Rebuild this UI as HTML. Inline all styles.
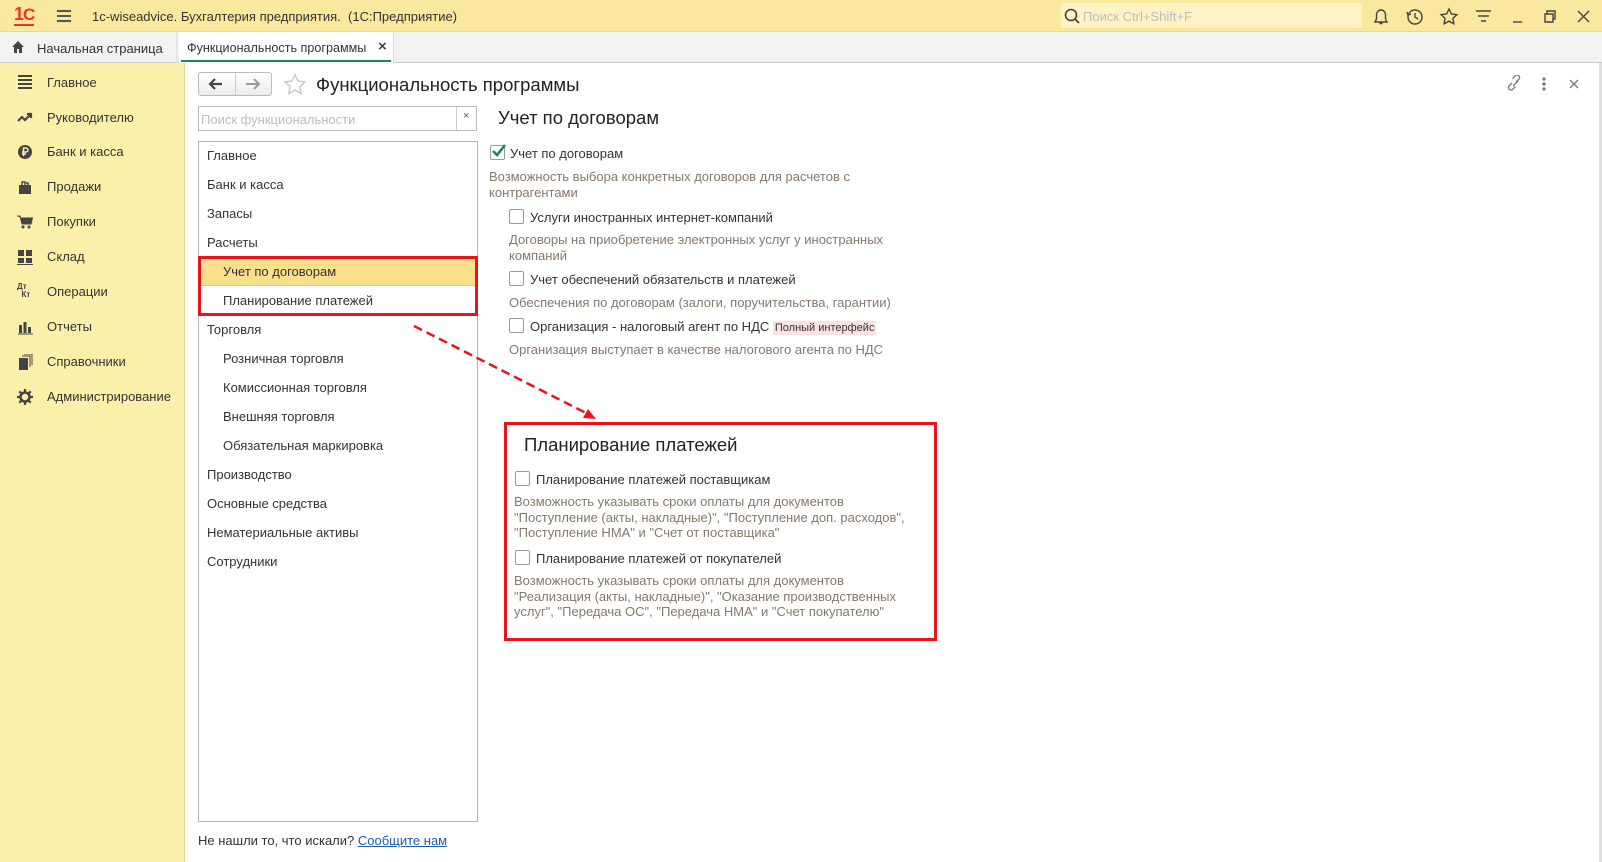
<!DOCTYPE html>
<html><head><meta charset="utf-8"><style>
*{margin:0;padding:0;box-sizing:border-box}
body{width:1602px;height:862px;overflow:hidden;background:#fff;font-family:"Liberation Sans",Arial,sans-serif;font-size:13px;color:#333;position:relative}
.a{position:absolute;white-space:nowrap}
.d{color:#86786a}
.cb{position:absolute;width:15px;height:15px;border:1px solid #9a9a9a;border-radius:2px;background:#fff}
.side{position:absolute;left:0;top:63px;width:185px;height:799px;background:#fbf0aa;border-right:1px solid #e0d6a0}
.si{position:absolute;left:47px;font-size:13px;color:#333}
.ic{position:absolute;left:17px;width:16px;height:16px}
.li{position:absolute;font-size:13px;color:#333}
</style></head><body>
<!-- title bar -->
<div class="a" style="left:0;top:0;width:1602px;height:32px;background:#f9e89e;border-bottom:1px solid #e8d88a"></div>
<div class="a" style="left:14px;top:5px;font:bold 18px 'Liberation Sans';color:#e32;letter-spacing:-1px;border-bottom:2px solid #e32;line-height:19px">1<span style="font-size:17px">C</span></div>
<div class="a" style="left:57px;top:10px;width:14px;height:2px;background:#555;box-shadow:0 5px 0 #555,0 10px 0 #555"></div>
<div class="a" style="left:92px;top:9px;font-size:13px;color:#333">1c-wiseadvice. Бухгалтерия предприятия.&nbsp; (1С:Предприятие)</div>
<div class="a" style="left:1061px;top:3px;width:301px;height:25px;background:#fdf3c4"></div>
<svg class="a" style="left:1064px;top:8px" width="16" height="16"><circle cx="7" cy="7" r="5.5" fill="none" stroke="#444" stroke-width="1.6"/><path d="M11 11l4 4" stroke="#444" stroke-width="1.8"/></svg>
<div class="a" style="left:1083px;top:9px;color:#bbb;font-size:13px">Поиск Ctrl+Shift+F</div>
<svg class="a" style="left:1372px;top:7px" width="230" height="20" fill="none" stroke="#444" stroke-width="1.4">
<path d="M9 3c-3 0-4.5 2.5-4.5 5v4L3 15h12l-1.5-3V8c0-2.5-1.5-5-4.5-5zM7.5 16.5h3"/>
<circle cx="43" cy="10" r="7"/><path d="M43 6v4l3 2M35 5l1 3 3-1"/>
<path d="M77 2l2.4 5 5.5.6-4 3.8 1 5.4-4.9-2.6-4.9 2.6 1-5.4-4-3.8 5.5-.6z"/>
<path d="M104 4h15M106 9h11M109 14h5"/>
<path d="M141 15h9"/>
<path d="M173 7h8v8h-8zM175 7V4h8v8h-2"/>
<path d="M206 4l11 11M217 4l-11 11"/>
</svg>
<!-- tab bar -->
<div class="a" style="left:0;top:32px;width:1602px;height:31px;background:#f2f2f2;border-bottom:1px solid #c8c8c8"></div>
<svg class="a" style="left:11px;top:40px" width="14" height="13"><path d="M7 1L1 7h2v6h3V9h2v4h3V7h2z" fill="#444"/></svg>
<div class="a" style="left:37px;top:41px;font-size:13px">Начальная страница</div>
<div class="a" style="left:176px;top:32px;width:1px;height:31px;background:#ddd"></div>
<div class="a" style="left:179px;top:32px;width:215px;height:32px;background:#fff;border-right:1px solid #ddd"></div>
<div class="a" style="left:181px;top:60px;width:210px;height:2px;background:#1a8a5a"></div>
<div class="a" style="left:187px;top:41px;font-size:12.6px">Функциональность программы</div>
<div class="a" style="left:378px;top:38px;font-size:15px;font-weight:bold;color:#444">×</div>
<!-- sidebar -->
<div class="side"></div>
<svg class="ic" style="top:74px" viewBox="0 0 16 16"><path d="M1 2h14M1 6h14M1 10h14M1 14h14" stroke="#444" stroke-width="2"/></svg>
<div class="si" style="top:75px">Главное</div>
<svg class="ic" style="top:109px" viewBox="0 0 16 16"><path d="M1 12l4-4 3 3 5-5M10 5h4v4" stroke="#444" stroke-width="2.2" fill="none"/></svg>
<div class="si" style="top:110px">Руководителю</div>
<svg class="ic" style="top:144px" viewBox="0 0 16 16"><circle cx="8" cy="8" r="7" fill="#444"/><path d="M6.5 12V4h2.5a2 2 0 010 4H5M5 10h4" stroke="#fbf0aa" stroke-width="1.4" fill="none"/></svg>
<div class="si" style="top:144px">Банк и касса</div>
<svg class="ic" style="top:179px" viewBox="0 0 16 16"><path d="M2 6h12v9H2z" fill="#444"/><path d="M5 7V3h3v3M9 4h2v3" stroke="#444" stroke-width="1.5" fill="none"/></svg>
<div class="si" style="top:179px">Продажи</div>
<svg class="ic" style="top:214px" viewBox="0 0 16 16"><path d="M0 2h3l2 8h9l1.5-6H4" fill="#444" stroke="#444"/><circle cx="6" cy="13" r="1.5" fill="#444"/><circle cx="12" cy="13" r="1.5" fill="#444"/></svg>
<div class="si" style="top:214px">Покупки</div>
<svg class="ic" style="top:249px" viewBox="0 0 16 16"><path d="M1 1h6v6H1zM9 1h6v6H9zM1 9h6v5H1zM9 9h6v5H9z" fill="#444"/><path d="M0 15.5h16" stroke="#444"/></svg>
<div class="si" style="top:249px">Склад</div>
<div class="a" style="left:17px;top:283px;font:bold 8px 'Liberation Sans';color:#444;line-height:8px">Дт<br>&nbsp;&nbsp;Кт</div>
<div class="si" style="top:284px">Операции</div>
<svg class="ic" style="top:319px" viewBox="0 0 16 16"><path d="M2 6h3v8H2zM6.5 3h3v11h-3zM11 8h3v6h-3z" fill="#444"/><path d="M1 15h15" stroke="#444"/></svg>
<div class="si" style="top:319px">Отчеты</div>
<svg class="ic" style="top:354px" viewBox="0 0 16 16"><path d="M2 4h9v12H2z" fill="#444"/><path d="M5 2h8v11M7 0h8v11" stroke="#444" fill="none"/></svg>
<div class="si" style="top:354px">Справочники</div>
<svg class="ic" style="top:389px" viewBox="0 0 16 16"><circle cx="8" cy="8" r="4.5" fill="none" stroke="#444" stroke-width="2.5"/><path d="M8 0v4M8 12v4M0 8h4M12 8h4M2.3 2.3l3 3M10.7 10.7l3 3M2.3 13.7l3-3M10.7 5.3l3-3" stroke="#444" stroke-width="2.2"/></svg>
<div class="si" style="top:389px">Администрирование</div>
<!-- content header -->
<div class="a" style="left:198px;top:72px;width:74px;height:24px;border:1px solid #bbb;border-radius:3px;background:linear-gradient(#fff,#ececec)"></div>
<div class="a" style="left:235px;top:73px;width:1px;height:22px;background:#ccc"></div>
<svg class="a" style="left:208px;top:77px" width="60" height="14"><path d="M14 7H2M7 2L2 7l5 5" stroke="#444" stroke-width="2.2" fill="none"/><path d="M38 7h13M46 2l5 5-5 5" stroke="#999" stroke-width="2" fill="none"/></svg>
<svg class="a" style="left:283px;top:73px" width="24" height="23"><path d="M12 1.5l3 6.5 7 .8-5.2 4.8 1.5 7-6.3-3.6-6.3 3.6 1.5-7L2 8.8 9 8z" fill="none" stroke="#c4c4c4" stroke-width="1.3"/></svg>
<div class="a" style="left:316px;top:74px;font-size:18.5px;color:#222">Функциональность программы</div>
<svg class="a" style="left:1505px;top:75px" width="80" height="18" fill="none" stroke="#777" stroke-width="1.3"><path d="M8 11l5-5M7 8l-3 3a2.5 2.5 0 003.5 3.5l3-3M11 7l3-3a2.5 2.5 0 00-3.5-3.5l-3 3"/><circle cx="39" cy="4" r="1" fill="#777"/><circle cx="39" cy="9" r="1" fill="#777"/><circle cx="39" cy="14" r="1" fill="#777"/><path d="M65 5l8 8M73 5l-8 8"/></svg>
<!-- search -->
<div class="a" style="left:198px;top:106px;width:279px;height:25px;border:1px solid #bbb;background:#fff"></div>
<div class="a" style="left:456px;top:107px;width:1px;height:23px;background:#ccc"></div>
<div class="a" style="left:201px;top:112px;color:#bbb;font-size:13px">Поиск функциональности</div>
<div class="a" style="left:463px;top:110px;font-size:11px;color:#555">×</div>
<!-- list -->
<div class="a" style="left:198px;top:141px;width:280px;height:681px;border:1px solid #b5b5b5;background:#fff"></div>
<div class="a" style="left:199px;top:257px;width:278px;height:29px;background:#fbe08c;border-bottom:1px solid #f0c850"></div>
<div class="li" style="left:207px;top:148px">Главное</div>
<div class="li" style="left:207px;top:177px">Банк и касса</div>
<div class="li" style="left:207px;top:206px">Запасы</div>
<div class="li" style="left:207px;top:235px">Расчеты</div>
<div class="li" style="left:223px;top:264px">Учет по договорам</div>
<div class="li" style="left:223px;top:293px">Планирование платежей</div>
<div class="li" style="left:207px;top:322px">Торговля</div>
<div class="li" style="left:223px;top:351px">Розничная торговля</div>
<div class="li" style="left:223px;top:380px">Комиссионная торговля</div>
<div class="li" style="left:223px;top:409px">Внешняя торговля</div>
<div class="li" style="left:223px;top:438px">Обязательная маркировка</div>
<div class="li" style="left:207px;top:467px">Производство</div>
<div class="li" style="left:207px;top:496px">Основные средства</div>
<div class="li" style="left:207px;top:525px">Нематериальные активы</div>
<div class="li" style="left:207px;top:554px">Сотрудники</div>
<div class="a" style="left:198px;top:256px;width:280px;height:60px;border:3px solid #e8141c"></div>
<div class="a" style="left:198px;top:833px">Не нашли то, что искали? <span style="color:#1a5fa8;text-decoration:underline">Сообщите нам</span></div>
<!-- arrow -->
<svg class="a" style="left:410px;top:322px" width="200" height="105"><path d="M4 4L180 93" stroke="#e8141c" stroke-width="2.5" stroke-dasharray="9 5" fill="none"/><path d="M186 97l-13-1 5-9z" fill="#e8141c"/></svg>
<!-- right content -->
<div class="a" style="left:498px;top:107px;font-size:18.5px;color:#222">Учет по договорам</div>
<div class="cb" style="left:490px;top:145px"></div>
<svg class="a" style="left:491px;top:143px" width="16" height="16"><path d="M2 8l4 4 8-10" stroke="#1b8a5a" stroke-width="2.6" fill="none"/></svg>
<div class="a" style="left:510px;top:146px">Учет по договорам</div>
<div class="a d" style="left:489px;top:169px;line-height:15.5px">Возможность выбора конкретных договоров для расчетов с<br>контрагентами</div>
<div class="cb" style="left:509px;top:209px"></div>
<div class="a" style="left:530px;top:210px">Услуги иностранных интернет-компаний</div>
<div class="a d" style="left:509px;top:232px;line-height:15.5px">Договоры на приобретение электронных услуг у иностранных<br>компаний</div>
<div class="cb" style="left:509px;top:271px"></div>
<div class="a" style="left:530px;top:272px">Учет обеспечений обязательств и платежей</div>
<div class="a d" style="left:509px;top:295px">Обеспечения по договорам (залоги, поручительства, гарантии)</div>
<div class="cb" style="left:509px;top:318px"></div>
<div class="a" style="left:530px;top:319px">Организация - налоговый агент по НДС <span style="background:#fbe0e4;font-size:11px;padding:1px 2px">Полный интерфейс</span></div>
<div class="a d" style="left:509px;top:342px">Организация выступает в качестве налогового агента по НДС</div>
<!-- box 2 -->
<div class="a" style="left:504px;top:422px;width:433px;height:219px;border:3px solid #e8141c"></div>
<div class="a" style="left:524px;top:434px;font-size:18.5px;color:#222">Планирование платежей</div>
<div class="cb" style="left:515px;top:471px"></div>
<div class="a" style="left:536px;top:472px">Планирование платежей поставщикам</div>
<div class="a d" style="left:514px;top:494px;line-height:15.5px">Возможность указывать сроки оплаты для документов<br>"Поступление (акты, накладные)", "Поступление доп. расходов",<br>"Поступление НМА" и "Счет от поставщика"</div>
<div class="cb" style="left:515px;top:550px"></div>
<div class="a" style="left:536px;top:551px">Планирование платежей от покупателей</div>
<div class="a d" style="left:514px;top:573px;line-height:15.5px">Возможность указывать сроки оплаты для документов<br>"Реализация (акты, накладные)", "Оказание производственных<br>услуг", "Передача ОС", "Передача НМА" и "Счет покупателю"</div>
<div class="a" style="left:1599px;top:63px;width:3px;height:799px;background:#ddd"></div>
</body></html>
